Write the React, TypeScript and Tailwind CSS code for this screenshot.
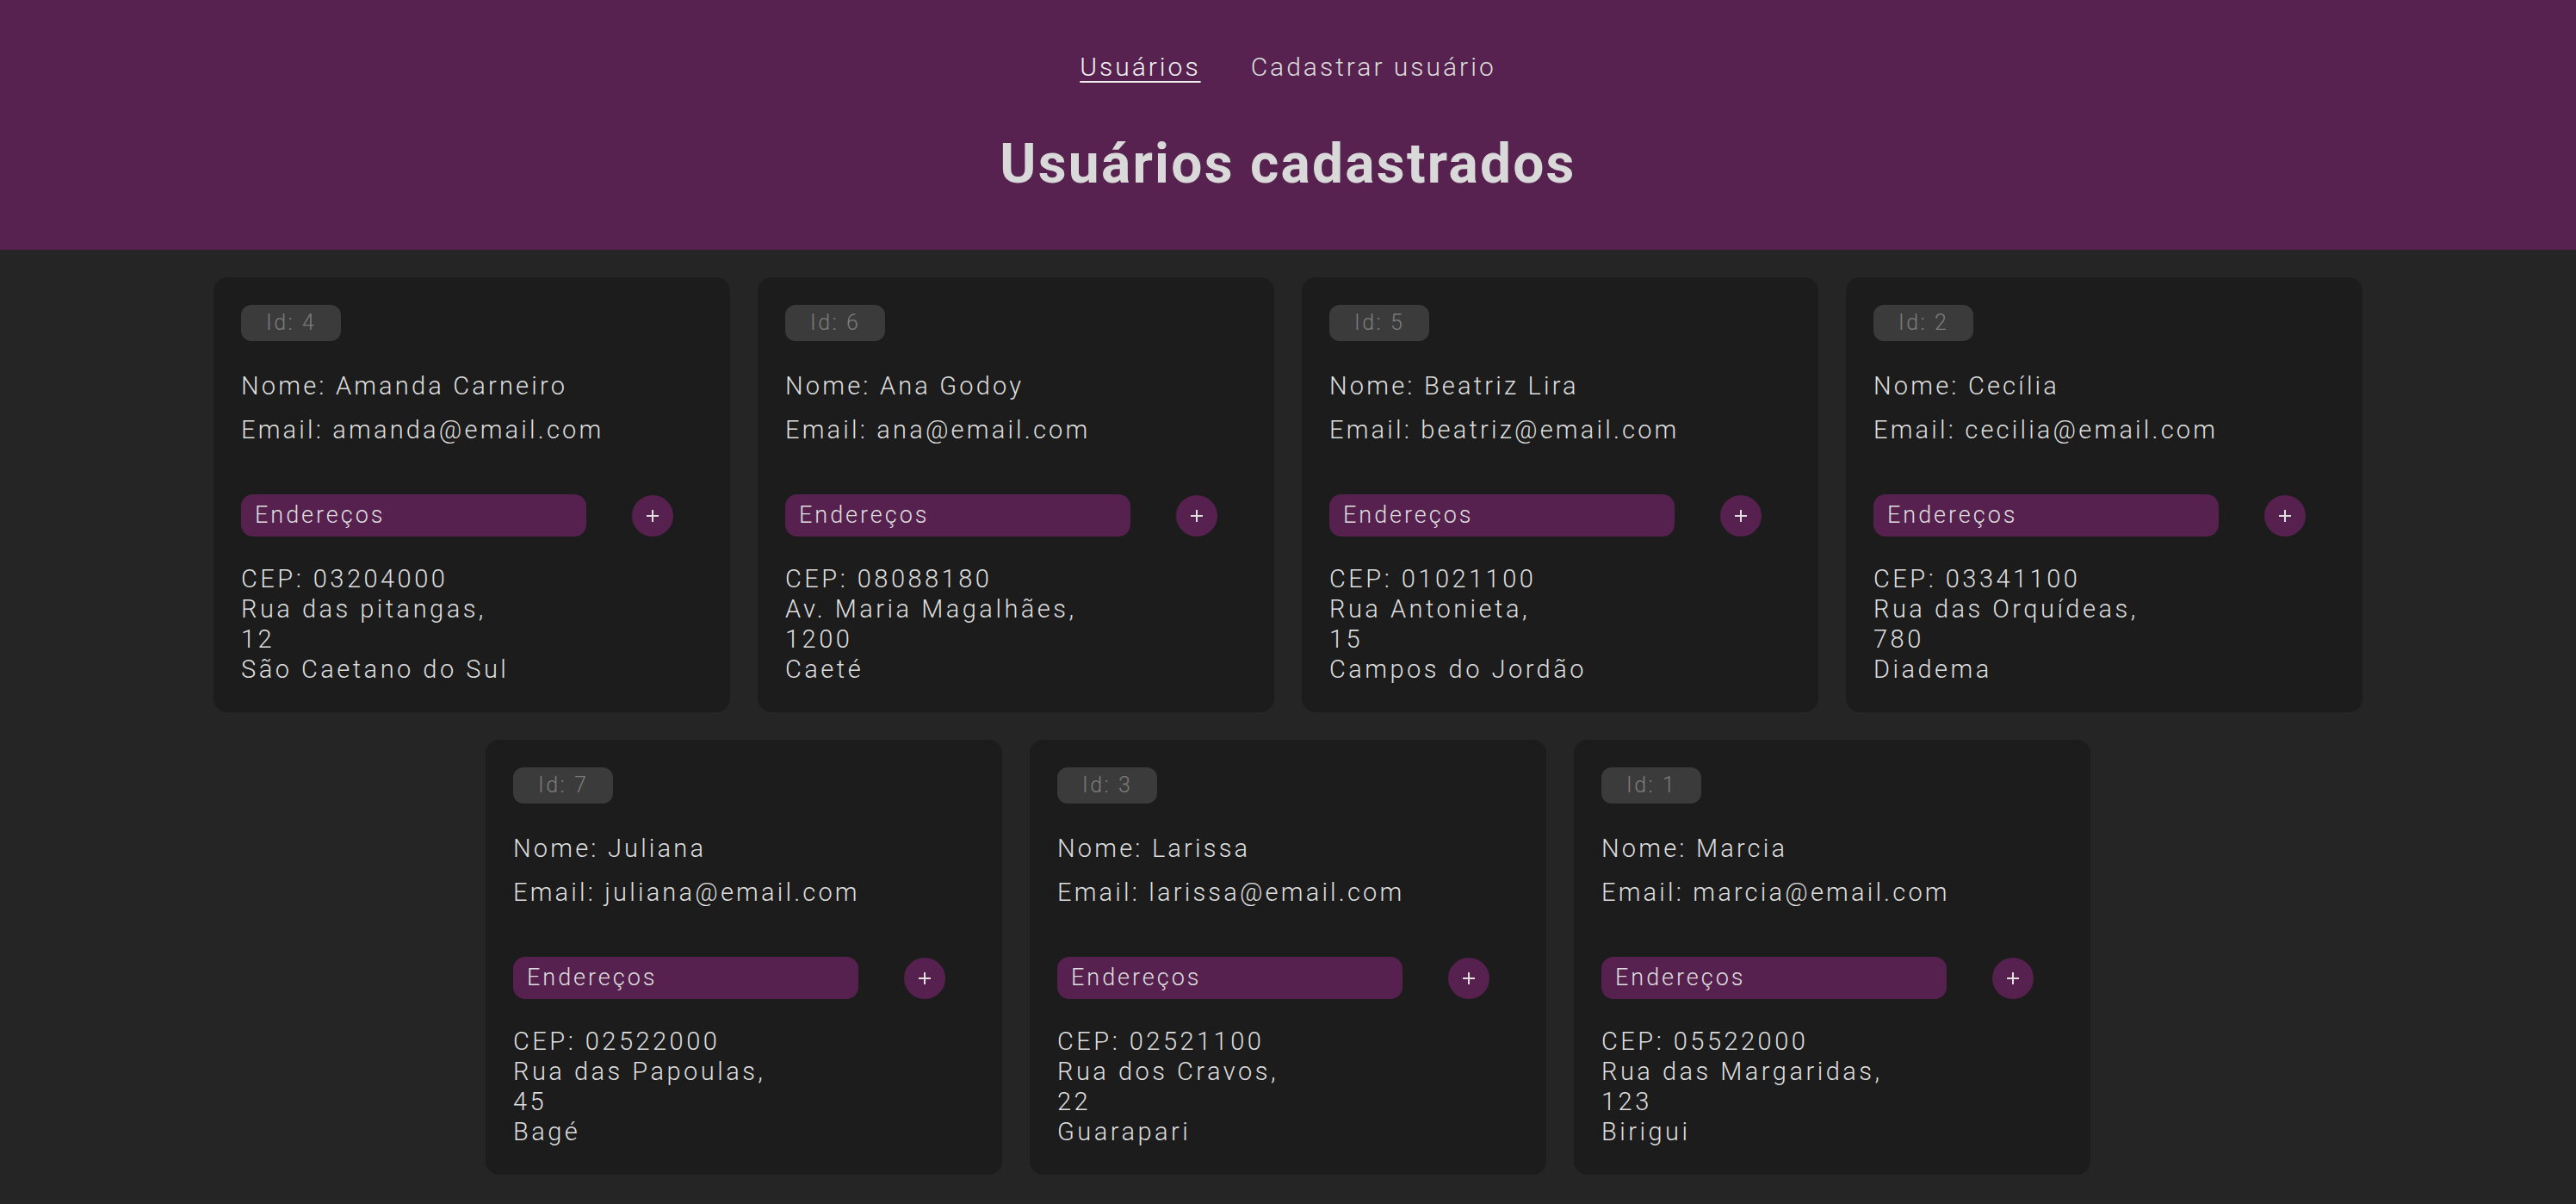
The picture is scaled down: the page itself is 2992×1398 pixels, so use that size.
import React from "react";

type Usuario = {
  id: number;
  nome: string;
  email: string;
  cep: string;
  rua: string;
  numero: string;
  cidade: string;
};

const usuarios: Usuario[] = [
  { id: 4, nome: "Amanda Carneiro", email: "amanda@email.com", cep: "03204000", rua: "Rua das pitangas", numero: "12", cidade: "São Caetano do Sul" },
  { id: 6, nome: "Ana Godoy", email: "ana@email.com", cep: "08088180", rua: "Av. Maria Magalhães", numero: "1200", cidade: "Caeté" },
  { id: 5, nome: "Beatriz Lira", email: "beatriz@email.com", cep: "01021100", rua: "Rua Antonieta", numero: "15", cidade: "Campos do Jordão" },
  { id: 2, nome: "Cecília", email: "cecilia@email.com", cep: "03341100", rua: "Rua das Orquídeas", numero: "780", cidade: "Diadema" },
  { id: 7, nome: "Juliana", email: "juliana@email.com", cep: "02522000", rua: "Rua das Papoulas", numero: "45", cidade: "Bagé" },
  { id: 3, nome: "Larissa", email: "larissa@email.com", cep: "02521100", rua: "Rua dos Cravos", numero: "22", cidade: "Guarapari" },
  { id: 1, nome: "Marcia", email: "marcia@email.com", cep: "05522000", rua: "Rua das Margaridas", numero: "123", cidade: "Birigui" },
];

const UserCard = ({ user }: { user: Usuario }) => {
  return (
    <div className="w-[600px] rounded-2xl bg-[#1c1c1c] p-8 pb-[32px]">
      {/* Id badge */}
      <span className="inline-block h-[42px] rounded-xl bg-[#3b3b3b] px-[29px] text-[25px] leading-[42px] tracking-[0.1em] text-[#7b7b7b]">
        Id: {user.id}
      </span>
      <p className="mt-[31px] text-[29px] leading-[42px] tracking-[0.11em]">Nome: {user.nome}</p>
      <p className="mt-[9px] text-[29px] leading-[42px] tracking-[0.11em]">Email: {user.email}</p>

      {/* Endereços row */}
      <div className="mt-[54px] flex items-center">
        <div className="h-[49px] w-[401px] rounded-[14px] bg-[#57214f] px-4 text-[27px] leading-[49px] tracking-[0.11em]">
          Endereços
        </div>
        <button className="ml-[53px] flex h-12 w-12 items-center justify-center rounded-full bg-[#57214f] text-[#e0e0e0]">
          <svg width="18" height="18" viewBox="0 0 18 18" fill="none" stroke="currentColor" strokeWidth="2">
            <path d="M9 2v14M2 9h14" />
          </svg>
        </button>
      </div>

      <div className="mt-[32px] text-[29px] leading-[35px] tracking-[0.12em]">
        <p>CEP: {user.cep}</p>
        <p>{user.rua},</p>
        <p>{user.numero}</p>
        <p>{user.cidade}</p>
      </div>
    </div>
  );
};

export default function App() {
  return (
    <div
      className="min-h-screen bg-[#252525] font-light text-[#dedede]"
      style={{ fontFamily: "Roboto, 'Noto Sans', sans-serif" }}
    >
      <header className="flex h-[290px] flex-col items-center bg-[#57224f] pt-[58px]">
        <nav className="flex gap-[58px] text-[30px] leading-[40px] tracking-[0.1em]">
          <a className="text-[#f2f2f2] underline underline-offset-[6px] decoration-2">Usuários</a>
          <a className="text-[#dcdcdc]">Cadastrar usuário</a>
        </nav>
        <h1 className="mt-[57px] text-[64px] font-bold leading-[72px] tracking-[0.035em] text-[#d9d9d9]">
          Usuários cadastrados
        </h1>
      </header>
      <main className="flex flex-wrap justify-center gap-8 px-8 py-8">
        {usuarios.map((u) => (
          <UserCard key={u.id} user={u} />
        ))}
      </main>
    </div>
  );
}
